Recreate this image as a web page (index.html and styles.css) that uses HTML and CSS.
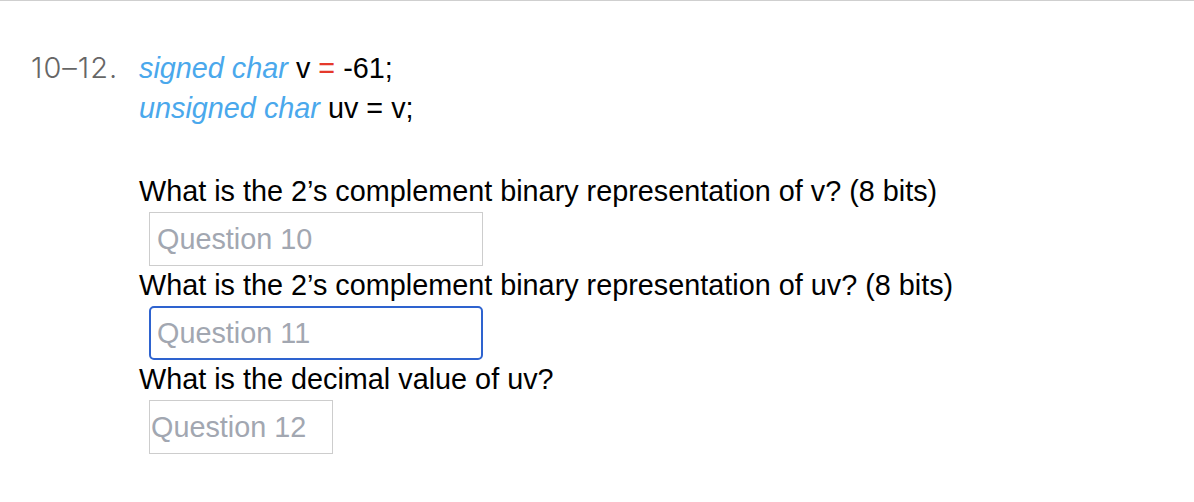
FILE: index.html
```html
<!DOCTYPE html>
<html>
<head>
<meta charset="utf-8">
<link rel="stylesheet" href="styles.css">
</head>
<body>
<div class="page">
  <div class="item">
    <div class="num">10–12.</div>
    <div class="body">
      <div class="code">
        <div class="code-line"><span class="kw">signed char</span> v <span class="op">=</span> -61;</div>
        <div class="code-line"><span class="kw">unsigned char</span> uv = v;</div>
      </div>
      <div class="questions">
        <p class="q">What is the 2’s complement binary representation of v? (8 bits)</p>
        <input class="answer" type="text" placeholder="Question 10">
        <p class="q">What is the 2’s complement binary representation of uv? (8 bits)</p>
        <input class="answer focused" type="text" placeholder="Question 11">
        <p class="q">What is the decimal value of uv?</p>
        <input class="answer short" type="text" placeholder="Question 12">
      </div>
    </div>
  </div>
</div>
</body>
</html>
```
FILE: styles.css
```css
html, body {
  margin: 0;
  padding: 0;
  background: #fff;
}
body {
  font-family: "Liberation Sans", Arial, Helvetica, sans-serif;
  color: #000;
}
.page {
  border-top: 1px solid #cfcfcf;
}
.item {
  display: flex;
  padding: 47px 0 0 31px;
}
.num {
  width: 108px;
  font-family: Inter, "Liberation Sans", sans-serif;
  font-weight: 300;
  font-size: 29px;
  letter-spacing: 1px;
  line-height: 40px;
  color: #666;
}
.body {
  display: flex;
  flex-direction: column;
}
.code-line {
  font-size: 28.8px;
  line-height: 40px;
}
.kw {
  color: #4aa8ec;
  font-style: italic;
}
.op {
  color: #e5392b;
}
.questions {
  display: flex;
  flex-direction: column;
  align-items: flex-start;
  margin-top: 46px;
}
.q {
  margin: 0;
  font-size: 28.8px;
  line-height: 34px;
}
.answer {
  box-sizing: border-box;
  width: 334px;
  height: 54px;
  margin: 4px 0 2px 10px;
  padding: 0 0 0 7px;
  border: 1px solid #cdcdcd;
  border-radius: 0;
  font-family: "Liberation Sans", Arial, sans-serif;
  font-size: 28.8px;
  color: #000;
  background: #fff;
  outline: none;
}
.answer::placeholder {
  color: #a2a7b1;
}
.answer.focused {
  border: 2px solid #2e63cf;
  border-radius: 5px;
  padding-left: 6px;
}
.answer.short {
  width: 184px;
  padding-left: 1px;
}
```
